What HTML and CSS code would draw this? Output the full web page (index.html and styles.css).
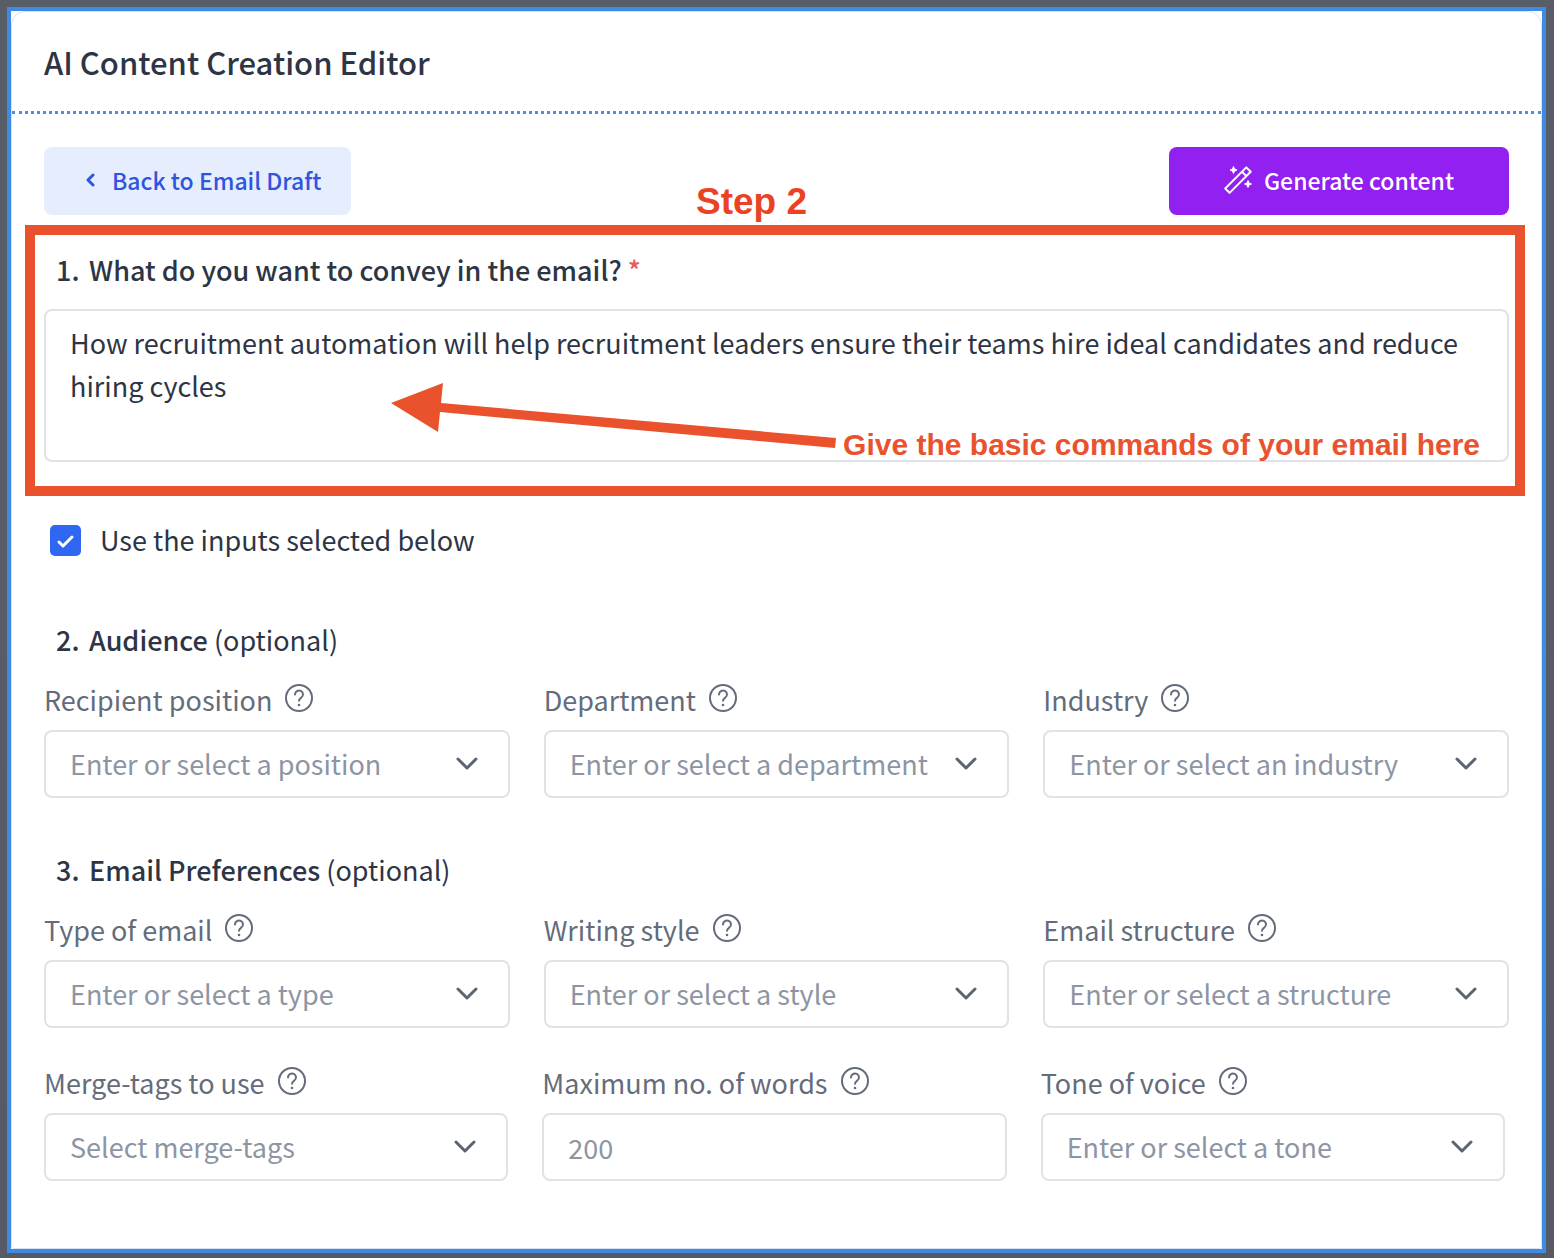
FILE: index.html
```
<!DOCTYPE html>
<html lang="en">
<head>
    <meta charset="UTF-8">
    <meta name="viewport" content="width=device-width, initial-scale=1.0">
    <title>AI Content Creation Editor</title>
    <link rel="stylesheet" href="styles.css">
</head>
<body>
    <!-- shared icons -->
    <svg class="sprite" aria-hidden="true">
        <symbol id="icon-help" viewBox="0 0 28 28">
            <circle cx="14" cy="14" r="13" fill="none" stroke="currentColor" stroke-width="2"/>
            <path d="M10 10.400a4 3.900 0 1 1 6.200 3.200c-1.500 1-2.200 1.600-2.200 3.200" fill="none" stroke="currentColor" stroke-width="2" stroke-linecap="round"/>
            <circle cx="14" cy="21" r="1.300" fill="currentColor"/>
        </symbol>
        <symbol id="icon-chevron" viewBox="0 0 22 14">
            <path d="M2 2l9 9 9-9" fill="none" stroke="currentColor" stroke-width="3" stroke-linecap="round" stroke-linejoin="round"/>
        </symbol>
    </svg>

    <div class="modal">
        <main class="panel">
            <header class="panel-header">
                <h1>AI Content Creation Editor</h1>
            </header>

            <div class="panel-body">
                <div class="toolbar">
                    <button type="button" class="btn btn-back">
                        <svg width="10" height="14" viewBox="0 0 10 14" aria-hidden="true">
                            <path d="M8 2L3 7l5 5" fill="none" stroke="currentColor" stroke-width="3" stroke-linecap="round" stroke-linejoin="round"/>
                        </svg>
                        Back to Email Draft
                    </button>
                    <span class="note note-step">Step 2</span>
                    <button type="button" class="btn btn-generate">
                        <svg width="28" height="28" viewBox="0 0 28 28" aria-hidden="true">
                            <g fill="none" stroke="currentColor" stroke-width="2" stroke-linejoin="round">
                                <path d="M1.200 22.500L22.300 1.400l4.400 4.400L5.600 26.900z"/>
                                <path d="M18 5.700l4.400 4.400"/>
                            </g>
                            <path d="M9.500 0.500l1 2.500 2.500 1-2.500 1-1 2.500-1-2.500-2.500-1 2.500-1zM24 14.500l1 2.500 2.500 1-2.500 1-1 2.500-1-2.500-2.500-1 2.500-1z" fill="currentColor" stroke="currentColor" stroke-linejoin="round"/>
                        </svg>
                        Generate content
                    </button>
                </div>

                <section class="prompt">
                    <h2><label for="prompt"><span class="num">1.</span>What do you want to convey in the email? <span class="required">*</span></label></h2>
                    <textarea id="prompt" required>How recruitment automation will help recruitment leaders ensure their teams hire ideal candidates and reduce hiring cycles</textarea>

                    <div class="highlight"></div>
                    <svg class="arrow" width="446" height="66" viewBox="0 0 446 66" aria-hidden="true">
                        <path d="M0 20L52 0l-2 20 395 35-1 10L49 29l-2 20z"/>
                    </svg>
                    <span class="note note-prompt">Give the basic commands of your email here</span>
                </section>

                <label class="check">
                    <input type="checkbox" checked>
                    Use the inputs selected below
                </label>

                <section class="group">
                    <h2><span class="num">2.</span>Audience <span class="optional">(optional)</span></h2>
                    <div class="fields">
                        <div class="field">
                            <label for="position">Recipient position <svg class="help"><use href="#icon-help"/></svg></label>
                            <div class="select">
                                <select id="position"><option>Enter or select a position</option></select>
                                <svg class="chevron"><use href="#icon-chevron"/></svg>
                            </div>
                        </div>
                        <div class="field">
                            <label for="department">Department <svg class="help"><use href="#icon-help"/></svg></label>
                            <div class="select">
                                <select id="department"><option>Enter or select a department</option></select>
                                <svg class="chevron"><use href="#icon-chevron"/></svg>
                            </div>
                        </div>
                        <div class="field">
                            <label for="industry">Industry <svg class="help"><use href="#icon-help"/></svg></label>
                            <div class="select">
                                <select id="industry"><option>Enter or select an industry</option></select>
                                <svg class="chevron"><use href="#icon-chevron"/></svg>
                            </div>
                        </div>
                    </div>
                </section>

                <section class="group">
                    <h2><span class="num">3.</span>Email Preferences <span class="optional">(optional)</span></h2>
                    <div class="fields">
                        <div class="field">
                            <label for="type">Type of email <svg class="help"><use href="#icon-help"/></svg></label>
                            <div class="select">
                                <select id="type"><option>Enter or select a type</option></select>
                                <svg class="chevron"><use href="#icon-chevron"/></svg>
                            </div>
                        </div>
                        <div class="field">
                            <label for="style">Writing style <svg class="help"><use href="#icon-help"/></svg></label>
                            <div class="select">
                                <select id="style"><option>Enter or select a style</option></select>
                                <svg class="chevron"><use href="#icon-chevron"/></svg>
                            </div>
                        </div>
                        <div class="field">
                            <label for="structure">Email structure <svg class="help"><use href="#icon-help"/></svg></label>
                            <div class="select">
                                <select id="structure"><option>Enter or select a structure</option></select>
                                <svg class="chevron"><use href="#icon-chevron"/></svg>
                            </div>
                        </div>
                    </div>
                    <div class="fields fields-last">
                        <div class="field">
                            <label for="tags">Merge-tags to use <svg class="help"><use href="#icon-help"/></svg></label>
                            <div class="select">
                                <select id="tags"><option>Select merge-tags</option></select>
                                <svg class="chevron"><use href="#icon-chevron"/></svg>
                            </div>
                        </div>
                        <div class="field">
                            <label for="words">Maximum no. of words <svg class="help"><use href="#icon-help"/></svg></label>
                            <input type="text" id="words" inputmode="numeric" placeholder="200">
                        </div>
                        <div class="field">
                            <label for="tone">Tone of voice <svg class="help"><use href="#icon-help"/></svg></label>
                            <div class="select">
                                <select id="tone"><option>Enter or select a tone</option></select>
                                <svg class="chevron"><use href="#icon-chevron"/></svg>
                            </div>
                        </div>
                    </div>
                </section>
            </div>
        </main>
    </div>
</body>
</html>
```
FILE: styles.css
```
* {
    box-sizing: border-box;
}

body {
    margin: 0;
    min-height: 100vh;
    padding: 7px 8px 5px 7px;
    display: flex;
    font-family: "Noto Sans CJK SC", "Noto Sans", sans-serif;
    font-size: 27px;
    line-height: 42px;
    color: #2d3545;
    background: linear-gradient(#575e68, #575a65);
}

.sprite {
    position: absolute;
    width: 0;
    height: 0;
}

.modal {
    flex: 1;
    border: 4px solid #3f8ae2;
    background: #fff;
}

.panel {
    height: 100%;
    border: 1px solid #d5e3f3;
    border-radius: 14px 14px 3px 3px;
}

.panel-header {
    padding: 29px 32px 28px;
    border-bottom: 3px dotted #4a90e2;
}

h1, h2 {
    margin: 0;
    font-size: 27px;
    font-weight: 500;
}

h1 {
    font-size: 31px;
}

.panel-body {
    padding: 33px 32px;
}

.toolbar {
    position: relative;
    display: flex;
    justify-content: space-between;
}

.btn {
    display: flex;
    align-items: center;
    justify-content: center;
    height: 68px;
    border: none;
    border-radius: 8px;
    font-family: inherit;
    font-size: 23px;
    font-weight: 500;
    cursor: pointer;
}

.btn-back {
    gap: 17px;
    padding: 0 30px 2px 41px;
    color: #2f54e0;
    background: #e6edfd;
}

.btn-generate {
    gap: 12px;
    padding: 0 55px 2px;
    color: #fff;
    background: #9220f0;
}

/* hand-placed notes over the form */
.note {
    position: absolute;
    font-family: "Liberation Sans", Arial, sans-serif;
    font-weight: bold;
    white-space: nowrap;
}

.note-step {
    left: 652px;
    top: 34px;
    font-size: 37px;
    color: #ec4224;
}

.note-prompt {
    right: 29px;
    top: 175px;
    font-size: 30px;
    color: #ea522d;
}

.highlight {
    position: absolute;
    inset: -24px -16px -34px -19px;
    border: 10px solid #ea522d;
    pointer-events: none;
}

.arrow {
    position: absolute;
    left: 347px;
    top: 134px;
    fill: #ea522d;
    pointer-events: none;
}

.prompt {
    position: relative;
    margin-top: 34px;
}

h2 {
    padding-left: 12px;
}

.num {
    display: inline-block;
    width: 33px;
}

.required {
    color: #e25c5c;
}

.optional {
    font-weight: 400;
}

textarea, select, input[type="text"] {
    display: block;
    width: 100%;
    border: 2px solid #e0e2e7;
    border-radius: 8px;
    padding: 0 24px;
    font-family: inherit;
    font-size: 27px;
    line-height: 42px;
    background: #fff;
}

textarea {
    height: 153px;
    margin-top: 18px;
    padding-top: 10px;
    line-height: 43px;
    color: #2d3545;
    resize: none;
}

.check {
    display: flex;
    align-items: center;
    gap: 19px;
    margin: 57px 0 0 6px;
}

.check input {
    appearance: none;
    width: 31px;
    height: 31px;
    margin: 0;
    border-radius: 5px;
    background: #2f66f2 url("data:image/svg+xml,%3Csvg xmlns='http://www.w3.org/2000/svg' viewBox='0 0 31 31'%3E%3Cpath d='M9 17l4 4 9-9' fill='none' stroke='white' stroke-width='3' stroke-linecap='round' stroke-linejoin='round'/%3E%3C/svg%3E");
}

.group {
    margin-top: 51px;
}

.check + .group {
    margin-top: 58px;
}

.fields {
    display: grid;
    grid-template-columns: repeat(3, 1fr);
    gap: 34px;
    margin-top: 18px;
}

.fields-last {
    margin-top: 34px;
    padding-right: 4px;
}

.field label {
    display: flex;
    gap: 13px;
    margin-bottom: 9px;
    color: #646c7b;
}

.help {
    width: 28px;
    height: 28px;
    margin-top: 5px;
}

.select {
    position: relative;
}

select, input[type="text"] {
    appearance: none;
    height: 68px;
    color: #8d95a4;
}

input::placeholder {
    color: #8d95a4;
}

.chevron {
    position: absolute;
    right: 32px;
    top: 27px;
    width: 22px;
    height: 14px;
    color: #5c6373;
    pointer-events: none;
}
```
